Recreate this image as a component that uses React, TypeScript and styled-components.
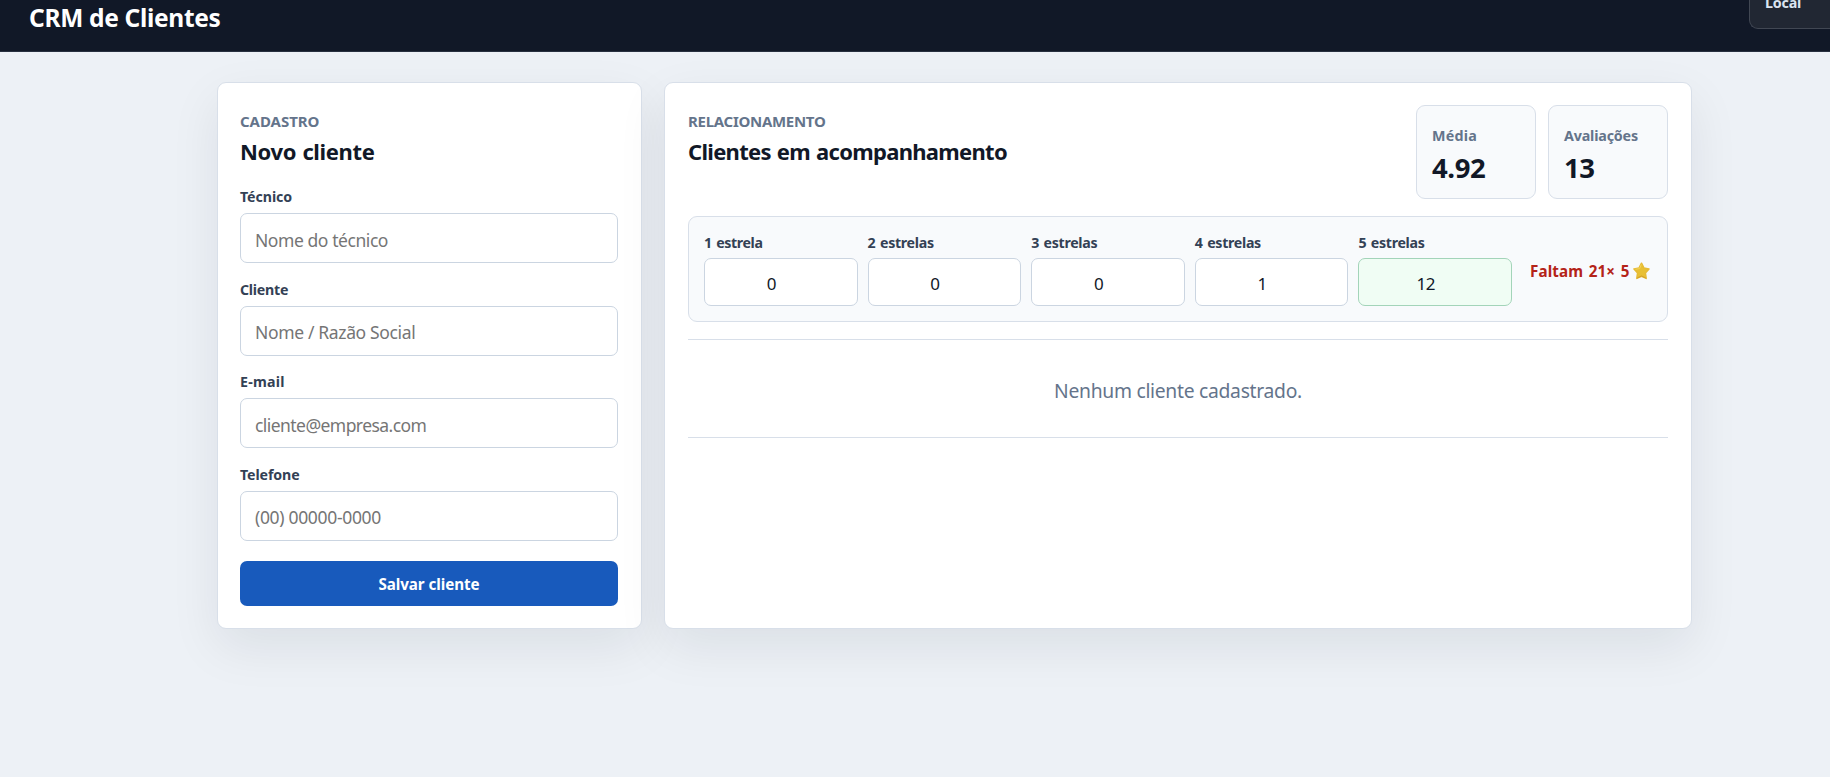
import React from 'react';
import styled, { createGlobalStyle } from 'styled-components';

const GlobalStyle = createGlobalStyle`
  *, *::before, *::after { box-sizing: border-box; }
  body {
    margin: 0;
    min-height: 777px;
    overflow: hidden;
    background: #edf1f6;
    color: #111827;
    font-family: "Segoe UI", "Noto Sans", sans-serif;
  }
  h1, h2, p { margin: 0; }
`;

const TopBar = styled.header`
  display: flex;
  justify-content: space-between;
  align-items: flex-start;
  height: 52px;
  padding-left: 29px;
  background: #111827;
  border-bottom: 1px solid #283040;
`;

const AppTitle = styled.h1`
  color: #fff;
  font-size: 24.5px;
  line-height: 35px;
  font-weight: 700;
  letter-spacing: -0.31px;
`;

const ModeBadge = styled.div`
  width: 81px;
  height: 29px;
  padding-left: 15px;
  border: 1px solid #414753;
  border-top: 0;
  border-right: 0;
  border-bottom-left-radius: 9px;
  background: #212733;
  color: #dbe4f0;
  font-size: 14.3px;
  line-height: 5px;
  font-weight: 700;
  letter-spacing: -0.2px;
`;

const Workspace = styled.main`
  display: grid;
  grid-template-columns: 425px 1028px;
  gap: 22px;
  width: 1475px;
  margin: 30px 0 0 217px;
`;

const Panel = styled.section`
  height: 547px;
  padding: 22px 23px;
  border: 1px solid #d8dfe9;
  border-radius: 9px;
  background: #fff;
  box-shadow: 0 18px 50px rgba(15, 23, 42, 0.08);
`;

const FormPanel = styled(Panel)`
  padding-left: 22px;
`;

const Eyebrow = styled.p<{ $tracking: number }>`
  color: #64748b;
  font-size: 15px;
  line-height: 32px;
  font-weight: 700;
  letter-spacing: ${(p) => p.$tracking}px;
  text-transform: uppercase;
`;

const SectionTitle = styled.h2<{ $tracking: number }>`
  font-size: 22px;
  line-height: 29px;
  font-weight: 700;
  letter-spacing: ${(p) => p.$tracking}px;
  word-spacing: 1px;
`;

const Form = styled.form`
  display: flex;
  flex-direction: column;
  gap: 16.67px;
  margin-top: 21px;
`;

const Field = styled.label`
  display: flex;
  flex-direction: column;
  gap: 7px;
`;

const FieldLabel = styled.span<{ $tracking: number }>`
  color: #334155;
  font-size: 14.2px;
  line-height: 19px;
  font-weight: 700;
  letter-spacing: ${(p) => p.$tracking}px;
`;

const TextInput = styled.input<{ $tracking: number }>`
  width: 100%;
  height: 50px;
  padding: 3px 14px 0;
  border: 1px solid #cbd5e1;
  border-radius: 7px;
  background: #fff;
  color: #111827;
  font: 400 17.5px "Segoe UI", "Noto Sans", sans-serif;
  letter-spacing: ${(p) => p.$tracking}px;
  outline: none;
  &::placeholder { color: #757575; }
`;

const SaveButton = styled.button`
  height: 45px;
  margin-top: 3.33px;
  padding: 2px 0 0;
  border: 0;
  border-radius: 7px;
  background: #185abc;
  color: #fff;
  font: 700 15.2px "Segoe UI", "Noto Sans", sans-serif;
  letter-spacing: -0.06px;
`;

const PanelHeader = styled.div`
  display: flex;
  justify-content: space-between;
  align-items: flex-start;
`;

const Stats = styled.div`
  display: grid;
  grid-template-columns: 120px 120px;
  gap: 12px;
`;

const StatCard = styled.div`
  height: 94px;
  padding: 19px 14px 0 15px;
  border: 1px solid #d8dfe9;
  border-radius: 9px;
  background: #f8fafc;
`;

const StatLabel = styled.div<{ $tracking: number }>`
  color: #64748b;
  font-size: 14.3px;
  line-height: 21px;
  font-weight: 700;
  letter-spacing: ${(p) => p.$tracking}px;
`;

const StatValue = styled.div`
  font-size: 27.5px;
  line-height: 43px;
  font-weight: 700;
  letter-spacing: -0.4px;
`;

const Ratings = styled.div`
  display: grid;
  grid-template-columns: repeat(5, 1fr) 130px;
  gap: 10px;
  align-items: center;
  height: 106px;
  margin-top: 17px;
  padding: 0 15px;
  border: 1px solid #d8dfe9;
  border-radius: 9px;
  background: #f8fafc;
`;

const RatingField = styled.label`
  display: flex;
  flex-direction: column;
  gap: 5px;
`;

const RatingLabel = styled(FieldLabel)`
  line-height: 21px;
  word-spacing: 1.2px;
`;

const CountInput = styled.input<{ $top: boolean }>`
  width: 100%;
  height: 48px;
  padding: 2px 19px 0 0;
  border: 1px solid ${(p) => (p.$top ? '#a3d4b9' : '#cbd5e1')};
  border-radius: 7px;
  background: ${(p) => (p.$top ? '#f0fdf4' : '#fff')};
  color: #111827;
  font: 400 17px "Segoe UI", "Noto Sans", sans-serif;
  letter-spacing: -0.6px;
  text-align: center;
  outline: none;
`;

const Goal = styled.div`
  display: flex;
  align-items: center;
  gap: 3px;
  padding: 3px 0 0 8px;
  color: #b42318;
  font-size: 15.2px;
  line-height: 22px;
  font-weight: 700;
  letter-spacing: 0.1px;
  word-spacing: 1.6px;
  white-space: nowrap;
`;

const EmptyState = styled.div`
  display: flex;
  align-items: center;
  justify-content: center;
  height: 99px;
  margin-top: 17px;
  padding-top: 3px;
  border-top: 1px solid #d8dfe9;
  border-bottom: 1px solid #d8dfe9;
  color: #64748b;
  font-size: 19.3px;
  letter-spacing: -0.28px;
`;

const Star = () => (
  <svg width="17" height="18" viewBox="0 0 17 18" aria-hidden="true">
    <path
      d="M8.5 1.2 10.9 5.9 16 6.9 12.4 10.9 13.2 16.4 8.5 14.3 3.8 16.4 4.6 10.9 1 6.9 6.1 5.9Z"
      fill="#e8c034"
      stroke="#e6bb35"
      strokeWidth="1.5"
      strokeLinejoin="round"
    />
    <path d="M8.3 2.4 6.7 6.5 2.4 7.3" fill="none" stroke="#f3d358" strokeWidth="1" />
    <path d="m4.2 16 4.3-2 4.3 2" fill="none" stroke="#cf9c2c" strokeWidth="0.9" />
  </svg>
);

const fields = [
  { label: 'Técnico', hint: 'Nome do técnico', lt: -0.08, ht: -0.43 },
  { label: 'Cliente', hint: 'Nome / Razão Social', lt: -0.25, ht: -0.35 },
  { label: 'E-mail', hint: 'cliente@empresa.com', lt: 0.22, ht: -0.56 },
  { label: 'Telefone', hint: '(00) 00000-0000', lt: -0.1, ht: -0.32 },
];

const ratings = [0, 0, 0, 1, 12];

export default function App() {
  return (
    <>
      <GlobalStyle />
      <TopBar>
        <AppTitle>CRM de Clientes</AppTitle>
        <ModeBadge>Local</ModeBadge>
      </TopBar>
      <Workspace>
        <FormPanel>
          <Eyebrow $tracking={-0.04}>Cadastro</Eyebrow>
          <SectionTitle $tracking={-0.37}>Novo cliente</SectionTitle>
          <Form>
            {fields.map((f) => (
              <Field key={f.label}>
                <FieldLabel $tracking={f.lt}>{f.label}</FieldLabel>
                <TextInput $tracking={f.ht} placeholder={f.hint} />
              </Field>
            ))}
            <SaveButton type="button">Salvar cliente</SaveButton>
          </Form>
        </FormPanel>
        <Panel>
          <PanelHeader>
            <div>
              <Eyebrow $tracking={-0.29}>Relacionamento</Eyebrow>
              <SectionTitle $tracking={-0.7}>Clientes em acompanhamento</SectionTitle>
            </div>
            <Stats>
              <StatCard>
                <StatLabel $tracking={0.2}>Média</StatLabel>
                <StatValue>4.92</StatValue>
              </StatCard>
              <StatCard>
                <StatLabel $tracking={-0.18}>Avaliações</StatLabel>
                <StatValue>13</StatValue>
              </StatCard>
            </Stats>
          </PanelHeader>
          <Ratings>
            {ratings.map((count, i) => (
              <RatingField key={i}>
                <RatingLabel $tracking={i === 0 ? -0.38 : -0.3}>
                  {`${i + 1} ${i === 0 ? 'estrela' : 'estrelas'}`}
                </RatingLabel>
                <CountInput $top={i === 4} defaultValue={count} />
              </RatingField>
            ))}
            <Goal>
              <span>Faltam 21× 5</span>
              <Star />
            </Goal>
          </Ratings>
          <EmptyState>Nenhum cliente cadastrado.</EmptyState>
        </Panel>
      </Workspace>
    </>
  );
}
